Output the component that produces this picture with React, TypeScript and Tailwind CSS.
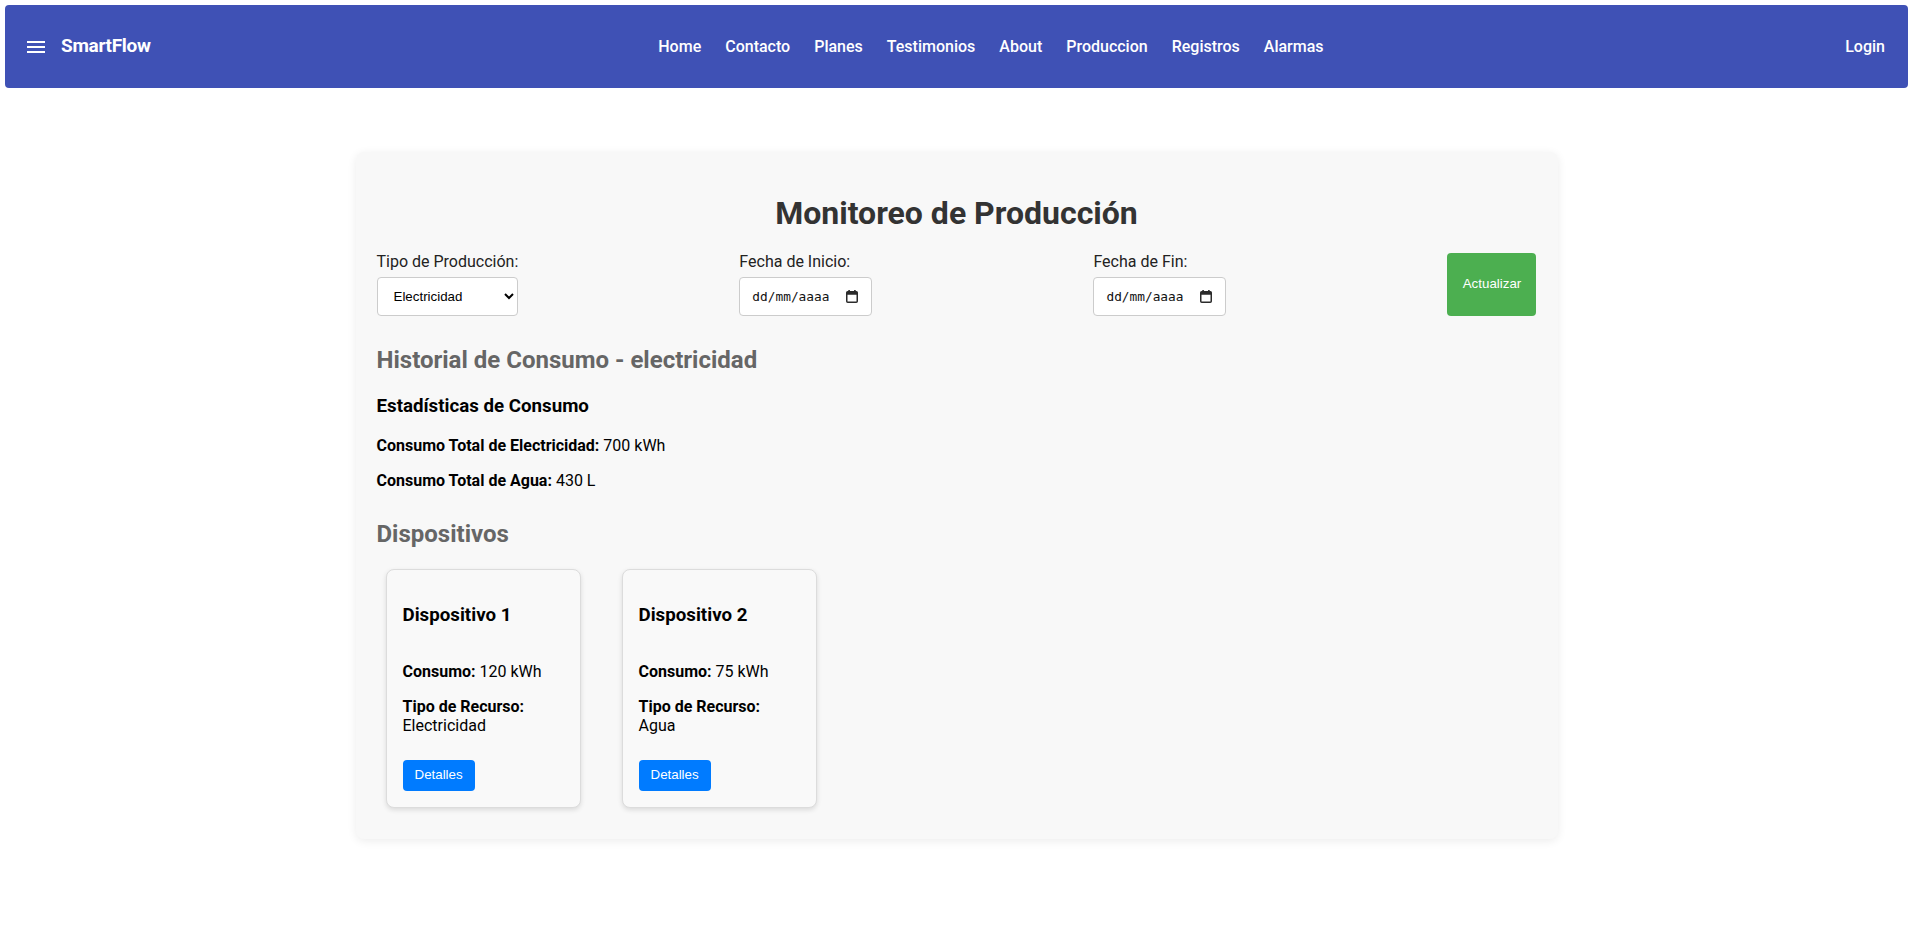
import React from "react";

function MenuIcon() {
  return (
    <svg width="24" height="24" viewBox="0 0 24 24" fill="white" aria-hidden="true">
      <path d="M3 18h18v-2H3zm0-5h18v-2H3zm0-7v2h18V6z" />
    </svg>
  );
}

function CalendarIcon() {
  return (
    <svg width="12" height="13" viewBox="0 0 12 13" aria-hidden="true">
      <rect x="2.3" y="0" width="1.6" height="2.4" fill="#2b2b2b" />
      <rect x="8.1" y="0" width="1.6" height="2.4" fill="#2b2b2b" />
      <rect x="0.75" y="1.75" width="10.5" height="10.5" rx="1" fill="none" stroke="#2b2b2b" strokeWidth="1.5" />
      <rect x="0.75" y="1.75" width="10.5" height="3" fill="#2b2b2b" />
    </svg>
  );
}

function DateField({ label }: { label: string }) {
  return (
    <div className="flex flex-col">
      <label className="mb-[5px] block text-[16px] leading-[18.75px] text-[#222]">{label}</label>
      <div className="flex h-[39px] w-[133px] items-center justify-between rounded-[4px] border border-[#ccc] bg-white pl-[12px] pr-[13px]">
        <span className="font-['DejaVu_Sans_Mono',monospace] text-[12.8px] text-[#111]">dd/mm/aaaa</span>
        <CalendarIcon />
      </div>
    </div>
  );
}

function DeviceCard({ name, consumo, recurso }: { name: string; consumo: string; recurso: string }) {
  return (
    <div className="flex w-[195px] flex-col rounded-[8px] border border-[#dcdcdc] bg-[#f9f9f9] px-[16px] pb-[16px] shadow-[0_2px_5px_rgba(0,0,0,0.12)]">
      <h3 className="mt-[34px] text-[18.72px] font-bold leading-[22px] text-black">{name}</h3>
      <p className="mt-[36px] text-[16px] leading-[19px] text-black">
        <strong>Consumo:</strong> {consumo}
      </p>
      <p className="mt-[16px] text-[16px] leading-[19px] text-black">
        <strong>Tipo de Recurso:</strong> {recurso}
      </p>
      <div className="mt-[25px]">
        <button className="h-[31px] rounded-[4px] bg-[#007bff] px-[12px] font-['Liberation_Sans',Arial,sans-serif] text-[13.33px] text-white">
          Detalles
        </button>
      </div>
    </div>
  );
}

export default function App() {
  const links = ["Home", "Contacto", "Planes", "Testimonios", "About", "Produccion", "Registros", "Alarmas"];
  return (
    <div className="min-h-screen bg-white font-['Roboto',sans-serif]">
      <header className="mx-[5px] mt-[5px] flex h-[83px] items-center rounded-[4px] bg-[#3f51b5] pl-[19px] pr-[23px] text-white">
        <MenuIcon />
        <span className="ml-[13px] text-[19px] font-bold tracking-[-0.3px]">SmartFlow</span>
        <nav className="mr-[14px] flex flex-1 justify-center gap-[24px] text-[16px] font-medium">
          {links.map((l) => (
            <span key={l}>{l}</span>
          ))}
        </nav>
        <span className="text-[16px] font-medium">Login</span>
      </header>

      <main className="mx-auto mt-[64px] flex w-[1202px] flex-col rounded-[8px] bg-[#f8f8f8] px-[21px] pb-[31px] pt-[20px] shadow-[0_2px_10px_rgba(0,0,0,0.08)]">
        <h1 className="mt-[23px] text-center text-[32px] font-bold leading-[37.5px] text-[#333]">
          Monitoreo de Producción
        </h1>

        <div className="mt-[20.5px] flex justify-between">
          <div className="flex flex-col">
            <label className="mb-[5px] block text-[16px] leading-[18.75px] text-[#222]">Tipo de Producción:</label>
            <select
              defaultValue="electricidad"
              className="h-[39px] w-[141px] rounded-[4px] border border-[#ccc] bg-white pl-[12px] pr-[8px] font-['Liberation_Sans',Arial,sans-serif] text-[13.33px] text-black"
            >
              <option value="electricidad">Electricidad</option>
              <option value="agua">Agua</option>
            </select>
          </div>
          <DateField label="Fecha de Inicio:" />
          <DateField label="Fecha de Fin:" />
          <button className="w-[89px] rounded-[4px] bg-[#4caf50] font-['Liberation_Sans',Arial,sans-serif] text-[13.33px] text-white">
            Actualizar
          </button>
        </div>

        <h2 className="mt-[30px] text-[24px] font-bold leading-[28px] text-[#666]">Historial de Consumo - electricidad</h2>
        <h3 className="mt-[21px] text-[18.72px] font-bold leading-[22px] text-black">Estadísticas de Consumo</h3>
        <p className="mt-[19px] text-[16px] leading-[19px] text-black">
          <strong>Consumo Total de Electricidad:</strong> 700 kWh
        </p>
        <p className="mt-[16px] text-[16px] leading-[19px] text-black">
          <strong>Consumo Total de Agua:</strong> 430 L
        </p>

        <h2 className="mt-[30px] text-[24px] font-bold leading-[28px] text-[#666]">Dispositivos</h2>
        <div className="mt-[21px] flex gap-[41px] pl-[9px]">
          <DeviceCard name="Dispositivo 1" consumo="120 kWh" recurso="Electricidad" />
          <DeviceCard name="Dispositivo 2" consumo="75 kWh" recurso="Agua" />
        </div>
      </main>
    </div>
  );
}
